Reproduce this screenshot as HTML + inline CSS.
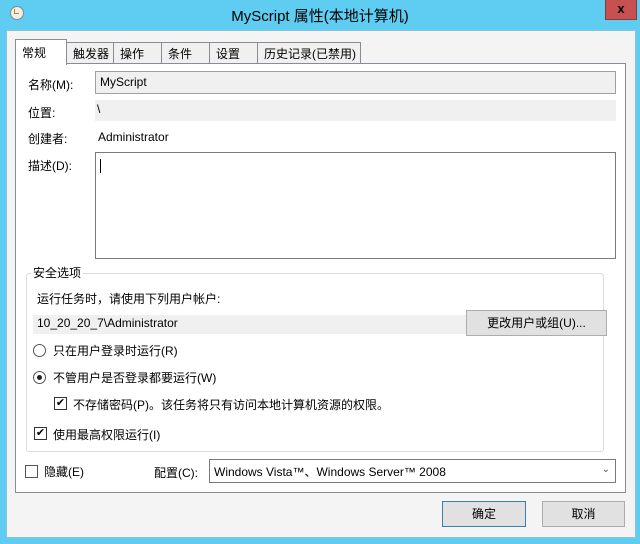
<!DOCTYPE html><html><head><meta charset="utf-8"><style>
*{box-sizing:border-box;margin:0;padding:0}
body{width:640px;height:544px;background:#5fcdf1;font-family:"Liberation Sans","Noto Sans CJK SC",sans-serif;font-size:12px;color:#000;position:relative;overflow:hidden}
.a{position:absolute}
.win{left:6px;top:30px;width:630px;height:508px;background:#f4f4f4;border:1px solid #8fc4d8}
.title{left:0;top:5px;width:640px;text-align:center;font-size:15px;color:#000}
.close{left:605px;top:0;width:32px;height:20px;background:#c75050;border:1px solid #8a3a3a;border-top:none;color:#000;font-weight:bold;text-align:center;line-height:18px;font-size:13px}
.panel{left:15px;top:63px;width:611px;height:430px;background:#fff;border:1px solid #898c95}
.tab{top:42px;height:22px;border:1px solid #898c95;background:#f0f0f0;padding:2px 0 0 6px;font-size:12px}
.inp{border:1px solid #a0a0a0;background:#fff}
.btn{background:#e1e1e1;border:1px solid #adadad;text-align:center}
.chk{width:13px;height:13px;border:1px solid #333;background:#fff;font-size:11px;line-height:11px;text-align:center}
.rad{width:13px;height:13px;border:1px solid #555;border-radius:50%;background:#fff}
</style></head><body>
<div class="a title">MyScript 属性(本地计算机)</div>
<div class="a" style="left:10px;top:6px;width:14px;height:14px;border-radius:50%;background:#eee;border:1px solid #888"><div class="a" style="left:3px;top:2px;width:5px;height:5px;border-left:1px solid #c80;border-bottom:1px solid #c80"></div></div>
<div class="a close">x</div>
<div class="a win"></div>
<div class="a panel"></div>
<div class="a tab" style="left:66px;width:48px">触发器</div>
<div class="a tab" style="left:113px;width:49px">操作</div>
<div class="a tab" style="left:161px;width:49px">条件</div>
<div class="a tab" style="left:209px;width:49px">设置</div>
<div class="a tab" style="left:257px;width:104px">历史记录(已禁用)</div>
<div class="a tab" style="left:15px;top:39px;width:52px;height:26px;background:#fff;border-bottom:none;padding-top:4px">常规</div>
<div class="a" style="left:28px;top:76px">名称(M):</div>
<div class="a inp" style="left:95px;top:71px;width:521px;height:23px;background:#f0f0f0;padding:3px 4px">MyScript</div>
<div class="a" style="left:28px;top:104px">位置:</div>
<div class="a" style="left:95px;top:100px;width:521px;height:21px;background:#f0f0f0;padding:2px 2px">\</div>
<div class="a" style="left:28px;top:130px">创建者:</div>
<div class="a" style="left:98px;top:130px">Administrator</div>
<div class="a" style="left:28px;top:157px">描述(D):</div>
<div class="a inp" style="left:95px;top:152px;width:521px;height:107px;border-color:#7a7a7a"><div class="a" style="left:4px;top:6px;width:1px;height:14px;background:#000"></div></div>
<div class="a" style="left:26px;top:273px;width:578px;height:179px;border:1px solid #dcdcdc;border-radius:3px"></div>
<div class="a" style="left:31px;top:264px;background:#fff;padding:0 2px">安全选项</div>
<div class="a" style="left:37px;top:290px">运行任务时，请使用下列用户帐户:</div>
<div class="a" style="left:33px;top:315px;width:436px;height:19px;background:#f0f0f0;padding:1px 4px">10_20_20_7\Administrator</div>
<div class="a btn" style="left:466px;top:310px;width:141px;height:26px;line-height:24px">更改用户或组(U)...</div>
<div class="a rad" style="left:33px;top:344px"></div>
<div class="a" style="left:53px;top:342px">只在用户登录时运行(R)</div>
<div class="a rad" style="left:33px;top:371px"><div class="a" style="left:3px;top:3px;width:5px;height:5px;border-radius:50%;background:#222"></div></div>
<div class="a" style="left:53px;top:369px">不管用户是否登录都要运行(W)</div>
<div class="a chk" style="left:54px;top:397px">✔</div>
<div class="a" style="left:73px;top:396px">不存储密码(P)。该任务将只有访问本地计算机资源的权限。</div>
<div class="a chk" style="left:34px;top:427px">✔</div>
<div class="a" style="left:53px;top:426px">使用最高权限运行(I)</div>
<div class="a chk" style="left:25px;top:465px;border-color:#555"></div>
<div class="a" style="left:44px;top:463px">隐藏(E)</div>
<div class="a" style="left:154px;top:464px">配置(C):</div>
<div class="a inp" style="left:209px;top:459px;width:407px;height:24px;border-color:#7a7a7a;padding:3px 4px">Windows Vista™、Windows Server™ 2008<span class="a" style="right:5px;top:4px;font-size:10px;color:#555">⌄</span></div>
<div class="a btn" style="left:442px;top:501px;width:84px;height:26px;line-height:24px;border-color:#3c7fb1">确定</div>
<div class="a btn" style="left:542px;top:501px;width:83px;height:26px;line-height:24px">取消</div>
</body></html>
